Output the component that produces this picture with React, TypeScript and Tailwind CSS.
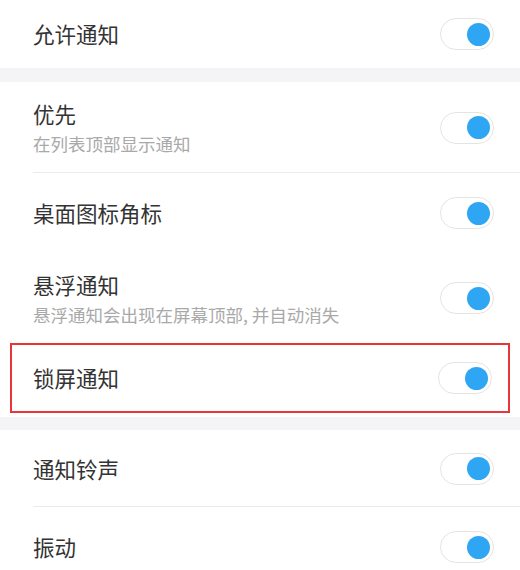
function Toggle() {
	return (
		<div className="w-[54px] h-[32px] rounded-full border border-[#e4e4e4] bg-white flex items-center justify-end pr-[3px] shrink-0">
			<div className="w-[23px] h-[23px] rounded-full bg-[#2ea6f4]" />
		</div>
	);
}

function Row({
	title,
	subtitle,
	height,
	divider,
}: {
	title: string;
	subtitle?: string;
	height: string;
	divider?: boolean;
}) {
	return (
		<div className={`flex items-center justify-between pl-[33px] pr-[26px] ${height} relative`}>
			<div className="flex flex-col">
				<span className="text-[21.5px] leading-[30px] text-[#333]">{title}</span>
				{subtitle && (
					<span className="text-[17.5px] leading-[24px] text-[#a9a9a9] mt-[3px]">{subtitle}</span>
				)}
			</div>
			<Toggle />
			{divider && <div className="absolute left-[33px] right-0 bottom-0 h-px bg-[#ebebeb]" />}
		</div>
	);
}

export default function App() {
	return (
		<div
			className="w-[520px] h-[570px] bg-white overflow-hidden"
			style={{ fontFamily: '"Noto Sans CJK SC", "Noto Sans", sans-serif' }}
		>
			<Row title="允许通知" height="h-[68px]" />
			<div className="h-[14px] bg-[#f4f4f6]" />
			<Row title="优先" subtitle="在列表顶部显示通知" height="h-[91px]" divider />
			<Row title="桌面图标角标" height="h-[80px]" />
			<Row title="悬浮通知" subtitle="悬浮通知会出现在屏幕顶部, 并自动消失" height="h-[90px]" />
			<div className="pb-[4px]">
				<div className="mx-[10px] h-[70px] border-2 border-[#e8353a] flex items-center justify-between pl-[21px] pr-[16px]">
					<span className="text-[21.5px] leading-[30px] text-[#333]">锁屏通知</span>
					<Toggle />
				</div>
			</div>
			<div className="h-[13px] bg-[#f4f4f6]" />
			<Row title="通知铃声" height="h-[77px]" divider />
			<Row title="振动" height="h-[80px]" />
		</div>
	);
}
